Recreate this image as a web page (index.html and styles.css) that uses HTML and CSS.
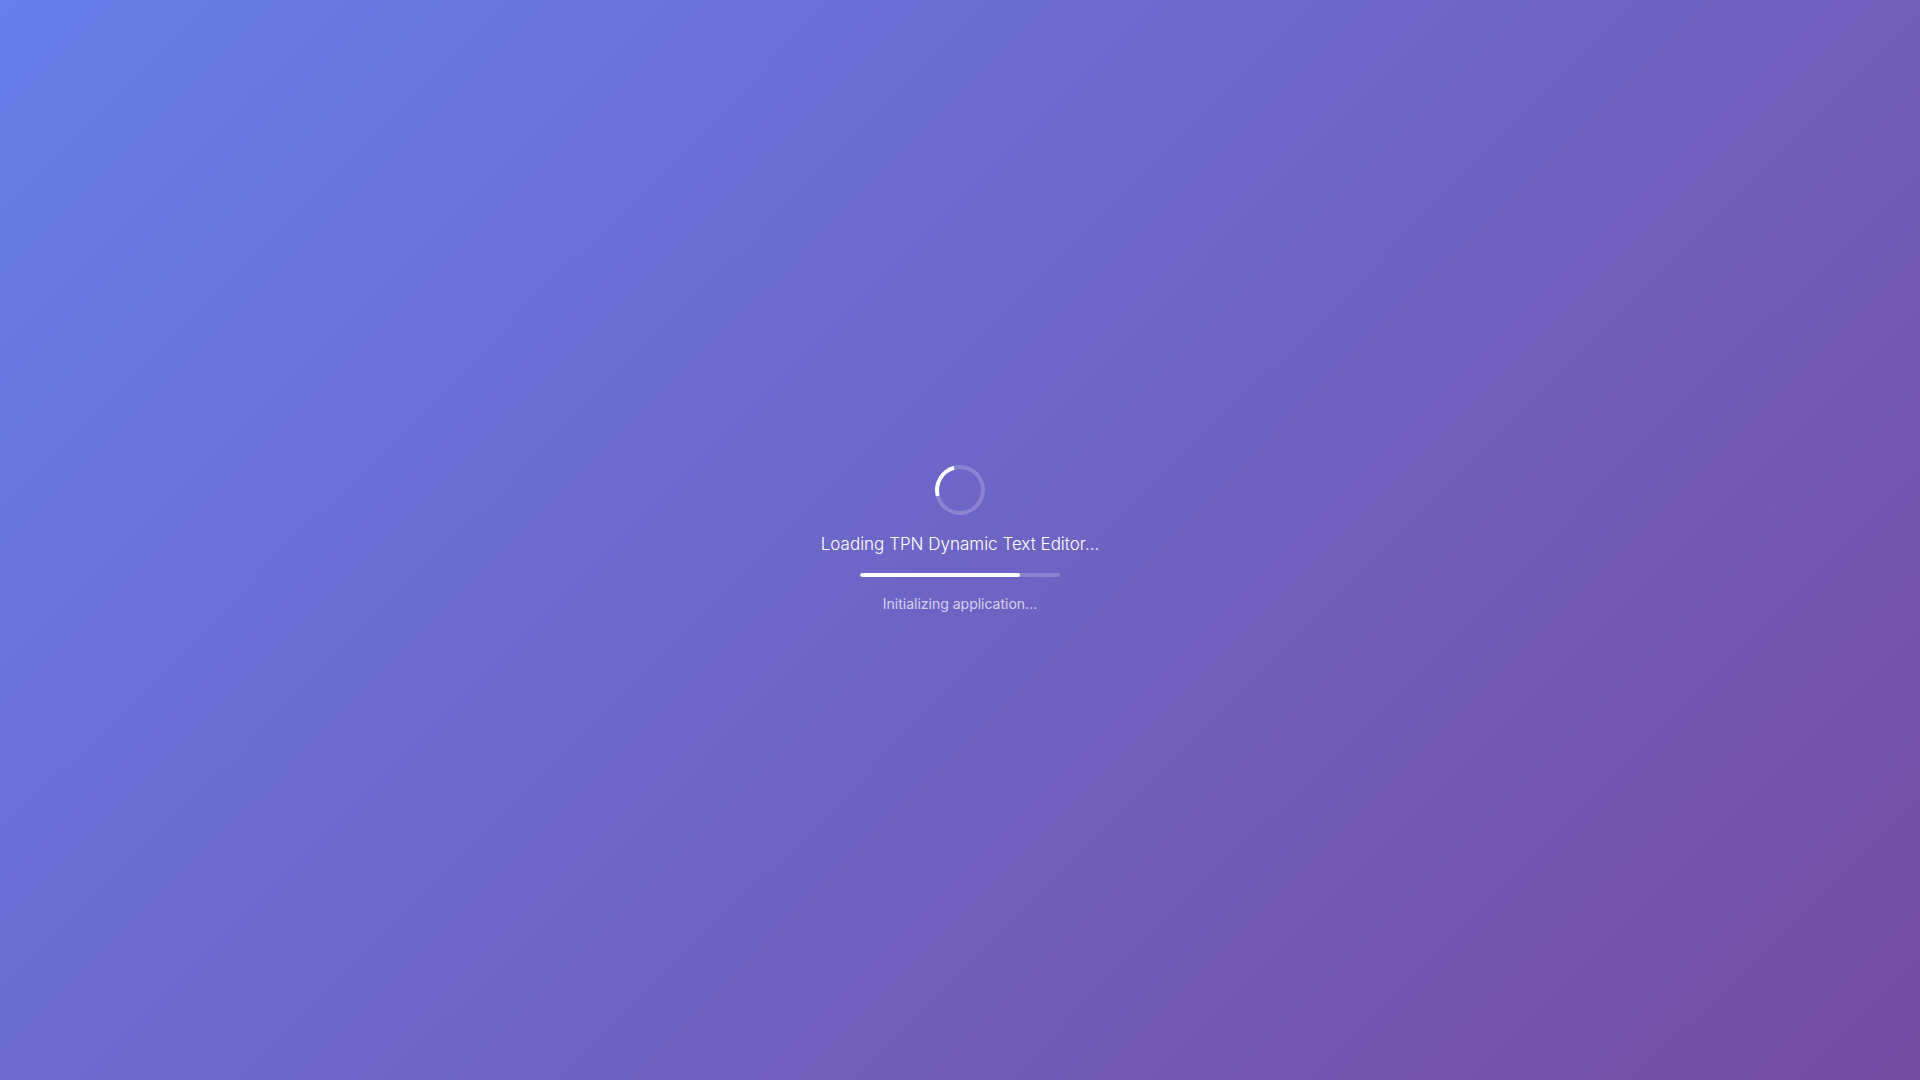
FILE: index.html
```html
<!DOCTYPE html>
<html lang="en">
<head>
<meta charset="utf-8">
<meta name="viewport" content="width=device-width, initial-scale=1">
<title>TPN Dynamic Text Editor</title>
<link rel="stylesheet" href="styles.css">
</head>
<body>
<main class="loading">
  <div class="spinner"></div>
  <p class="loading-text">Loading TPN Dynamic Text Editor...</p>
  <div class="progress" role="progressbar" aria-label="Loading" aria-valuenow="80" aria-valuemin="0" aria-valuemax="100"><div class="progress-bar" style="width: 80%"></div></div>
  <p class="status">Initializing application...</p>
</main>
</body>
</html>
```
FILE: styles.css
```css
body {
  margin: 0;
  font-family: Inter, "Liberation Sans", sans-serif;
  color: #fff;
}

.loading {
  display: flex;
  flex-direction: column;
  align-items: center;
  justify-content: center;
  min-height: 100vh;
  background: linear-gradient(135deg, #667eea 0%, #764ba2 100%);
}

.spinner {
  box-sizing: border-box;
  width: 50px;
  height: 50px;
  margin-bottom: 20px;
  border: 4px solid rgba(255, 255, 255, 0.2);
  border-top-color: #fff;
  border-radius: 50%;
  transform: rotate(-60deg);
}

.loading-text {
  margin: 0 0 20px;
  font-size: 17px;
  font-weight: 300;
  line-height: 18px;
}

.progress {
  width: 200px;
  height: 4px;
  margin-bottom: 16px;
  border-radius: 2px;
  background: rgba(255, 255, 255, 0.2);
  overflow: hidden;
}

.progress-bar {
  height: 100%;
  border-radius: 2px;
  background: #fff;
}

.status {
  margin: 0;
  font-size: 14px;
  line-height: 22px;
  opacity: 0.7;
}
```
